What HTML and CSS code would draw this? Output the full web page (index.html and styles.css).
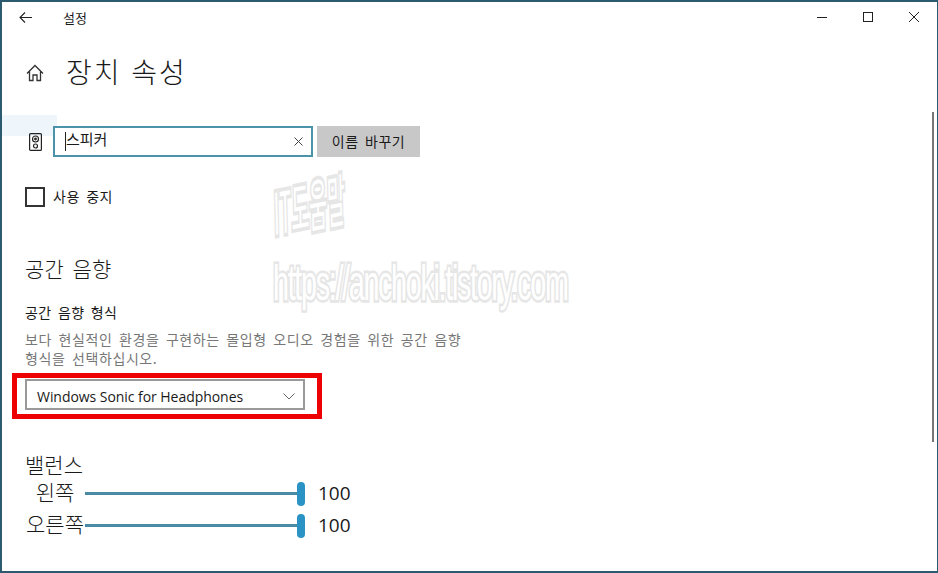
FILE: index.html
```html
<!DOCTYPE html>
<html lang="ko">
<head>
    <meta charset="UTF-8">
    <meta name="viewport" content="width=device-width, initial-scale=1.0">
    <title>설정</title>
    <link rel="stylesheet" href="styles.css">
</head>
<body>
    <div class="window">
        <header class="titlebar">
            <svg class="back-icon" width="13" height="11" viewBox="0 0 13 11" fill="none" stroke="#222" stroke-width="1.1">
                <path d="M1 5.5H13M6 0.5L1 5.5L6 10.5"/>
            </svg>
            <span class="title">설정</span>
            <div class="window-buttons">
                <svg width="12" height="12" viewBox="0 0 12 12" stroke="#222" fill="none"><path d="M1 6.5H11"/></svg>
                <svg width="12" height="12" viewBox="0 0 12 12" stroke="#222" fill="none"><rect x="1.5" y="1.5" width="9" height="9"/></svg>
                <svg width="12" height="12" viewBox="0 0 12 12" stroke="#222" fill="none"><path d="M1 1L11 11M11 1L1 11"/></svg>
            </div>
        </header>

        <div class="page-head">
            <svg class="home-icon" width="18" height="18" viewBox="0 0 18 18" fill="none" stroke="#333" stroke-width="1.3">
                <path d="M1 9.5L9 1.5L17 9.5M3.5 7.5V16.5H7V11H11V16.5H14.5V7.5"/>
            </svg>
            <h1>장치 속성</h1>
        </div>

        <div class="name-row">
            <svg class="speaker-icon" width="13" height="18" viewBox="0 0 13 18" fill="none" stroke="#222" stroke-width="1.2">
                <rect x="0.6" y="0.6" width="11.8" height="16.8" rx="1"/>
                <circle cx="6.5" cy="6" r="3"/>
                <circle cx="6.5" cy="6" r="0.8"/>
                <circle cx="6.5" cy="13" r="2"/>
            </svg>
            <div class="name-input">
                <span class="caret"></span>
                <span class="name-text">스피커</span>
                <svg class="clear-icon" width="9" height="9" viewBox="0 0 9 9" stroke="#444" fill="none"><path d="M0.5 0.5L8.5 8.5M8.5 0.5L0.5 8.5"/></svg>
            </div>
            <button class="rename-btn" type="button">이름 바꾸기</button>
        </div>

        <label class="disable-row">
            <span class="checkbox"></span>
            <span>사용 중지</span>
        </label>

        <h2 class="section-title">공간 음향</h2>
        <div class="field-label">공간 음향 형식</div>
        <p class="field-desc">보다 현실적인 환경을 구현하는 몰입형 오디오 경험을 위한 공간 음향 형식을 선택하십시오.</p>

        <div class="select-wrap">
            <div class="select-box">
                <span>Windows Sonic for Headphones</span>
                <svg width="12" height="7" viewBox="0 0 12 7" fill="none" stroke="#666"><path d="M0.5 0.5L6 6L11.5 0.5"/></svg>
            </div>
            <div class="red-mark"></div>
        </div>

        <h2 class="balance-title">밸런스</h2>
        <div class="balance-row">
            <span class="side-label">왼쪽</span>
            <div class="slider"><span class="slider-thumb"></span></div>
            <span class="slider-value">100</span>
        </div>
        <div class="balance-row">
            <span class="side-label">오른쪽</span>
            <div class="slider"><span class="slider-thumb"></span></div>
            <span class="slider-value">100</span>
        </div>

        <!-- things that sit on top of the page -->
        <div class="focus-patch"></div>
        <div class="scrollbar"></div>
        <div class="watermark">
            <span class="mark-top">IT도움말</span>
            <span class="mark-url">https://anchoki.tistory.com</span>
        </div>
    </div>
</body>
</html>
```

FILE: styles.css
```css
* {
    box-sizing: border-box;
}

html, body {
    margin: 0;
    padding: 0;
    height: 100%;
    background-color: #fff;
}

body {
    font-family: "Open Sans", "Noto Sans CJK KR", sans-serif;
    color: #1a1a1a;
    overflow: hidden;
}

.window {
    position: relative;
    isolation: isolate;
    width: 938px;
    height: 573px;
    padding: 0 0 0 23px;
    border: 2px solid #2c5a70;
    border-width: 2px 1px 2px 2px;
    overflow: hidden;
}

/* title bar */
.titlebar {
    display: flex;
    align-items: center;
    height: 30px;
    margin-left: -23px;
    padding-left: 17px;
}

.title {
    margin-left: 31px;
    font-size: 13px;
    font-family: "Noto Sans CJK KR", sans-serif;
}

.window-buttons {
    display: flex;
    gap: 34px;
    margin-left: auto;
    padding-right: 17px;
}

/* page heading */
.page-head {
    display: flex;
    align-items: center;
    gap: 22px;
    height: 40px;
    margin-top: 19px;
}

.home-icon {
    margin-left: 1px;
    margin-top: 3px;
}

h1 {
    margin: 0;
    font-size: 28px;
    font-weight: 300;
    font-family: "Noto Sans CJK KR", sans-serif;
    letter-spacing: 2px;
}

/* name input row */
.name-row {
    display: flex;
    align-items: center;
    margin-top: 35px;
}

.speaker-icon {
    margin-left: 4px;
    margin-right: 11px;
}

.name-input {
    display: flex;
    align-items: center;
    width: 260px;
    height: 31px;
    padding: 0 8px 0 10px;
    border: 2px solid #4a93a8;
    background-color: #fff;
}

.caret {
    width: 1px;
    height: 19px;
    background-color: #222;
}

.name-text {
    flex: 1;
    margin-top: -6px;
    font-size: 15px;
    font-family: "Noto Sans CJK KR", sans-serif;
}

.rename-btn {
    width: 103px;
    height: 31px;
    margin-left: 4px;
    padding: 0 0 2px;
    border: none;
    background-color: #c8c8c8;
    color: #1a1a1a;
    font-size: 14px;
    letter-spacing: 0.5px;
    word-spacing: 2px;
    font-family: "Noto Sans CJK KR", sans-serif;
}

/* checkbox */
.disable-row {
    display: flex;
    align-items: center;
    gap: 8px;
    margin-top: 30px;
    font-size: 14px;
    letter-spacing: 0.5px;
    word-spacing: 2px;
    font-family: "Noto Sans CJK KR", sans-serif;
}

.disable-row span:last-child {
    margin-top: -3px;
}

.checkbox {
    width: 20px;
    height: 20px;
    border: 2px solid #333;
}

/* spatial sound */
.section-title {
    margin: 46px 0 0;
    font-size: 21px;
    line-height: 30px;
    font-weight: 300;
    letter-spacing: 0.3px;
    word-spacing: 2px;
    font-family: "Noto Sans CJK KR", sans-serif;
}

.field-label {
    margin-top: 19px;
    font-size: 14px;
    line-height: 20px;
    letter-spacing: 0.4px;
    word-spacing: 2px;
    font-family: "Noto Sans CJK KR", sans-serif;
}

.field-desc {
    width: 445px;
    margin: 8px 0 0;
    color: #777;
    font-size: 14px;
    line-height: 19px;
    letter-spacing: 0.6px;
    word-spacing: 2px;
    font-family: "Noto Sans CJK KR", sans-serif;
}

.select-wrap {
    position: relative;
    width: 280px;
    margin-top: 11px;
}

.select-box {
    display: flex;
    align-items: center;
    justify-content: space-between;
    height: 31px;
    padding: 4px 8px 0 10px;
    border: 2px solid #999;
    font-size: 14px;
    letter-spacing: -0.05px;
}

.red-mark {
    position: absolute;
    left: -13px;
    top: -6px;
    width: 310px;
    height: 46px;
    border: 5px solid #ee0000;
}

/* balance */
.balance-title {
    margin: 45px 0 0;
    font-size: 21px;
    line-height: 22px;
    font-weight: 300;
    font-family: Roboto, "Noto Sans CJK KR", sans-serif;
}

.balance-row {
    display: flex;
    align-items: center;
    height: 32px;
}

.side-label {
    width: 60px;
    font-size: 21px;
    line-height: 22px;
    font-weight: 300;
    text-align: center;
    white-space: nowrap;
    font-family: Roboto, "Noto Sans CJK KR", sans-serif;
}

.slider {
    position: relative;
    width: 220px;
    height: 3px;
    background-color: #4a8ba3;
}

.slider-thumb {
    position: absolute;
    right: 0;
    top: -10px;
    width: 8px;
    height: 24px;
    border-radius: 4px;
    background-color: #2a93c4;
}

.slider-value {
    margin-left: 13px;
    font-size: 19px;
}

/* overlays */
.focus-patch {
    position: absolute;
    left: 0;
    top: 113px;
    width: 55px;
    height: 21px;
    background-color: #eef6fc;
    z-index: -1;
}

.scrollbar {
    position: absolute;
    right: 3px;
    top: 110px;
    width: 2px;
    height: 330px;
    background-color: #777;
}

.watermark {
    position: absolute;
    left: 271px;
    top: 176px;
    color: #fff;
    -webkit-text-stroke: 3.5px #e6e6e6;
    paint-order: stroke fill;
    pointer-events: none;
}

.mark-top {
    display: block;
    width: max-content;
    font-family: "Noto Sans CJK KR", sans-serif;
    font-size: 26px;
    line-height: 30px;
    transform-origin: left top;
    transform: scale(0.75, 2.2) rotate(-4deg);
}

.mark-url {
    display: block;
    width: max-content;
    margin-top: 45px;
    font-family: "Liberation Sans", sans-serif;
    font-size: 33px;
    line-height: 40px;
    letter-spacing: -1.5px;
    transform-origin: left top;
    transform: scale(0.87, 1.5);
}
```
